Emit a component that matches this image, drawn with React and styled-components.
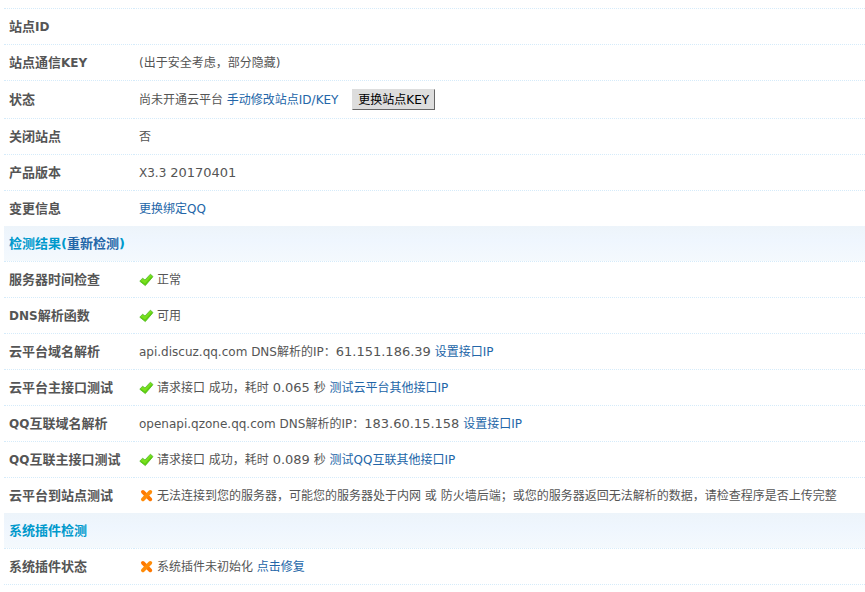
import React from 'react';
import styled, { createGlobalStyle } from 'styled-components';

const GlobalStyle = createGlobalStyle`
    body {
        margin: 0;
        background: #fff;
        color: #555;
        font: 12px/20px 'DejaVu Sans', 'Noto Sans CJK SC', sans-serif;
    }
`
const Page = styled.main`
    padding: 8px 0 0 4px;
`
const Table = styled.table`
    width: 100%;
    border-collapse: separate;
    border-spacing: 0;
    border-bottom: 1px dotted #d5ebfa;
`
const Row = styled.tr`
    height: ${ props => props.$height ? props.$height : '36px'};
`
const Label = styled.th`
    box-sizing: border-box;
    width: 130px;
    padding: 0 5px;
    border-top: 1px dotted #d5ebfa;
    font-size: 13px;
    text-align: left;
    white-space: nowrap;
`
const Value = styled.td`
    padding: 0 5px;
    border-top: 1px dotted #d5ebfa;
`
const Heading = styled.th`
    height: 35px;
    padding: 0 5px;
    background: linear-gradient(#edf4fa, #eff6fe 40%, #f4f9fd);
    color: #09c;
    font-size: 13px;
    text-align: left;
`
const Latin = styled.span`
    font-size: 12px;
`
const Digits = styled.span`
    font-size: 13px;
`
const Link = styled.a`
    color: #2366a8;
    text-decoration: none;

    &:hover {
        text-decoration: underline;
    }
`
const Button = styled.button`
    height: 21px;
    margin-left: 10px;
    padding: 1px 5px 0;
    border: 1px solid;
    border-color: #ddd #666 #666 #ddd;
    background: #ddd;
    color: #000;
    font: inherit;
    line-height: 18px;
    cursor: pointer;
`
const Icon = styled.svg`
    width: 16px;
    height: 16px;
    margin-right: 2px;
    vertical-align: -4px;
`

function Tick() {
    return (
        <Icon viewBox='0 0 16 16' role='img' aria-label='正常'>
            <path d='M0.8 9.2L3.6 6.2L6 8L11.4 2.2L14 4.6L6.3 13.6Z' fill='#78e01c' stroke='#52b52c' strokeWidth='0.8' strokeLinejoin='round' />
            <path d='M2 9.6L6.2 12.4L12.8 5' fill='none' stroke='#5ccb12' strokeWidth='1.2' />
        </Icon>
    )
}

function Cross() {
    return (
        <Icon viewBox='0 0 16 16' role='img' aria-label='错误'>
            <path d='M3.9 3.9L11.3 11.3' stroke='#ff7800' strokeWidth='3.8' strokeLinecap='round' />
            <path d='M11.3 3.9L3.9 11.3' stroke='#ff8c08' strokeWidth='3.8' strokeLinecap='round' />
        </Icon>
    )
}

function Item({label, height, children}) {
    return (
        <Row $height={height}>
            <Label scope='row'>{label}</Label>
            <Value>{children}</Value>
        </Row>
    )
}

function App() {
    return (
        <Page>
            <GlobalStyle />
            <Table>
                <tbody>
                    <Item label={<>站点<Latin>ID</Latin></>} />
                    <Item label={<>站点通信<Latin>KEY</Latin></>}>(出于安全考虑，部分隐藏)</Item>
                    <Item label='状态' height='38px'>
                        尚未开通云平台 <Link href='#site'>手动修改站点ID/KEY</Link> <Button type='button'>更换站点KEY</Button>
                    </Item>
                    <Item label='关闭站点'>否</Item>
                    <Item label='产品版本'>X3.3 <Digits>20170401</Digits></Item>
                    <Item label='变更信息'><Link href='#qq'>更换绑定QQ</Link></Item>
                </tbody>
                <tbody>
                    <tr>
                        <Heading colSpan='2' scope='rowgroup'>检测结果(<Link href='#check'>重新检测</Link>)</Heading>
                    </tr>
                    <Item label='服务器时间检查'><Tick />正常</Item>
                    <Item label={<><Latin>DNS</Latin>解析函数</>}><Tick />可用</Item>
                    <Item label='云平台域名解析'>
                        api.discuz.qq.com DNS解析的IP：<Digits>61.151.186.39</Digits> <Link href='#api-ip'>设置接口IP</Link>
                    </Item>
                    <Item label='云平台主接口测试'>
                        <Tick />请求接口 成功，耗时 <Digits>0.065</Digits> 秒 <Link href='#api-test'>测试云平台其他接口IP</Link>
                    </Item>
                    <Item label={<><Latin>QQ</Latin>互联域名解析</>}>
                        openapi.qzone.qq.com DNS解析的IP：<Digits>183.60.15.158</Digits> <Link href='#qzone-ip'>设置接口IP</Link>
                    </Item>
                    <Item label={<><Latin>QQ</Latin>互联主接口测试</>}>
                        <Tick />请求接口 成功，耗时 <Digits>0.089</Digits> 秒 <Link href='#qzone-test'>测试QQ互联其他接口IP</Link>
                    </Item>
                    <Item label='云平台到站点测试'>
                        <Cross />无法连接到您的服务器，可能您的服务器处于内网 或 防火墙后端；或您的服务器返回无法解析的数据，请检查程序是否上传完整
                    </Item>
                </tbody>
                <tbody>
                    <tr>
                        <Heading colSpan='2' scope='rowgroup'>系统插件检测</Heading>
                    </tr>
                    <Item label='系统插件状态'>
                        <Cross />系统插件未初始化 <Link href='#repair'>点击修复</Link>
                    </Item>
                </tbody>
            </Table>
        </Page>
    )
}

export default App;
